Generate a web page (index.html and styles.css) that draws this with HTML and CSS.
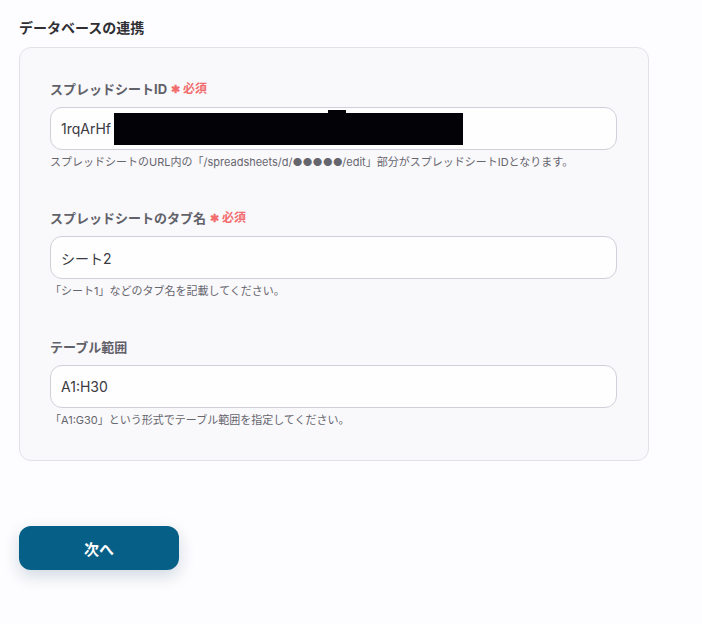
FILE: index.html
```html
<!DOCTYPE html>
<html lang="ja">
<head>
<meta charset="utf-8">
<link rel="stylesheet" href="styles.css">
</head>
<body>
<main class="page">
  <h2 class="title">データベースの連携</h2>
  <section class="card">
    <div class="field">
      <label class="label">スプレッドシートID <span class="req"><span class="star">✱</span>必須</span></label>
      <div class="input">1rqArHf
        <span class="redact"></span><span class="redact-bump"></span>
      </div>
      <p class="help">スプレッドシートのURL内の「/spreadsheets/d/●●●●●/edit」部分がスプレッドシートIDとなります。</p>
    </div>
    <div class="field">
      <label class="label">スプレッドシートのタブ名 <span class="req"><span class="star">✱</span>必須</span></label>
      <div class="input">シート2</div>
      <p class="help">「シート1」などのタブ名を記載してください。</p>
    </div>
    <div class="field">
      <label class="label">テーブル範囲</label>
      <div class="input">A1:H30</div>
      <p class="help">「A1:G30」という形式でテーブル範囲を指定してください。</p>
    </div>
  </section>
  <button class="next">次へ</button>
</main>
</body>
</html>
```
FILE: styles.css
```css
* { box-sizing: border-box; }
html, body { margin: 0; padding: 0; }
body {
  background: #fdfcfe;
  font-family: Inter, "Noto Sans CJK JP", sans-serif;
  color: #333;
  width: 702px;
  height: 624px;
  overflow: hidden;
}
.page {
  padding: 18px 0 0 19px;
  display: flex;
  flex-direction: column;
  align-items: flex-start;
}
.title {
  margin: 0;
  font-size: 14px;
  line-height: 20px;
  font-weight: 700;
  color: #2f2f33;
}
.card {
  margin-top: 9px;
  width: 630px;
  border: 1px solid #e2e1e8;
  border-radius: 12px;
  background: #f9f8fb;
  padding: 31px 31px 32px 30px;
  display: flex;
  flex-direction: column;
  gap: 38px;
}
.field { display: flex; flex-direction: column; }
.label {
  font-size: 13px;
  line-height: 20px;
  font-weight: 700;
  color: #616169;
  display: flex;
  align-items: center;
}
.req {
  margin-left: 4px;
  font-size: 12px;
  color: #f26d6d;
  font-weight: 700;
  display: inline-flex;
  align-items: center;
}
.star { font-size: 11px; margin-right: 3px; }
.input {
  position: relative;
  margin-top: 8px;
  height: 43px;
  border: 1px solid #cfd0d9;
  border-radius: 12px;
  background: #fefeff;
  padding: 0 10px;
  font-size: 14px;
  color: #3a3a40;
  display: flex;
  align-items: center;
}
.redact {
  position: absolute;
  left: 63px;
  top: 5px;
  width: 349px;
  height: 32px;
  background: #030206;
}
.redact-bump {
  position: absolute;
  left: 277px;
  top: 2px;
  width: 18px;
  height: 4px;
  background: #030206;
}
.help {
  margin: 4px 0 0;
  font-size: 11px;
  line-height: 16px;
  color: #66666e;
}
.next {
  margin-top: 65px;
  width: 160px;
  height: 44px;
  border: none;
  border-radius: 12px;
  background: #065f86;
  color: #fff;
  font-family: inherit;
  font-size: 15px;
  font-weight: 700;
  box-shadow: 0 6px 16px rgba(6, 60, 100, 0.18);
}
```
